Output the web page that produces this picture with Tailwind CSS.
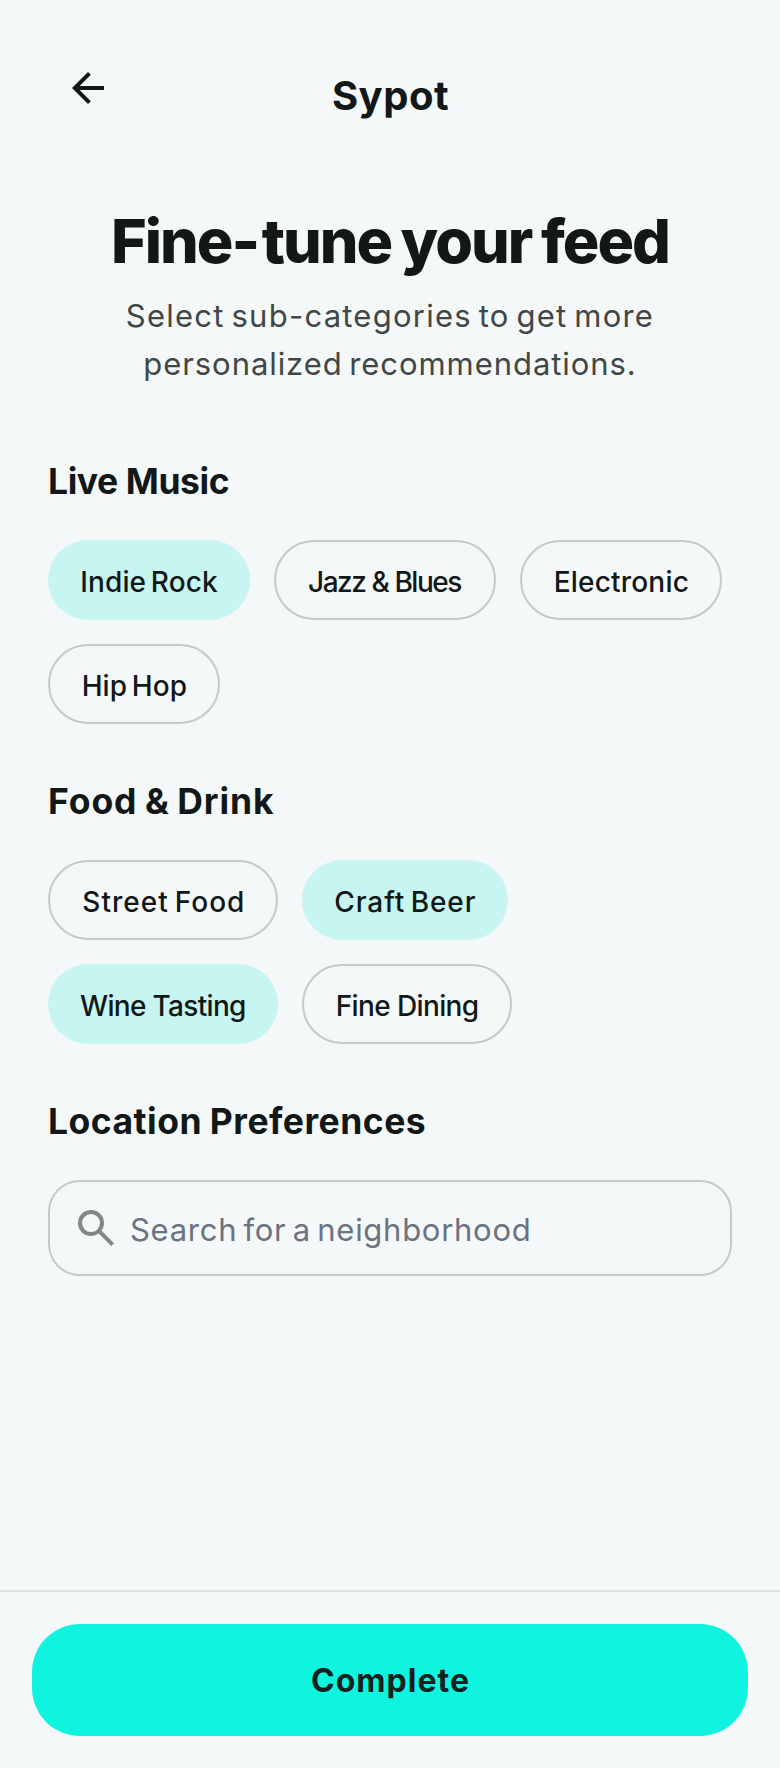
<!DOCTYPE html>
<html lang="en">
<head>
<meta charset="utf-8">
<title>Sypot</title>
<script src="https://cdn.jsdelivr.net/npm/@tailwindcss/browser@4"></script>
</head>
<body class="bg-[#f5f8f8] font-['Inter',sans-serif] text-[#111817]">
<div class="flex h-[1768px] w-[780px] flex-col overflow-hidden">
  <header class="flex h-[200px] shrink-0 items-start justify-between px-16 pt-16">
    <button class="size-12" aria-label="Back">
      <svg class="size-12" viewBox="0 -960 960 960" fill="currentColor"><path d="m313-440 224 224-57 56-320-320 320-320 57 56-224 224h487v80H313Z"/></svg>
    </button>
    <div class="pt-[7px] pl-px text-[40px] leading-[50px] font-bold tracking-[0.5px]">Sypot</div>
    <div class="size-12"></div>
  </header>

  <main class="flex grow flex-col px-12">
    <h1 class="text-center text-[61px] leading-[83px] font-extrabold tracking-[-2px] whitespace-nowrap [word-spacing:-0.03em]">Fine<span class="tracking-[1.5px]">-</span>tune your feed</h1>
    <p class="mt-[9px] text-center text-[31px] leading-12 tracking-[1.24px] text-[#414746] [word-spacing:-0.1em]">Select sub-categories to get more<br><span class="tracking-[0.94px]">personalized recommendations.</span></p>

    <section class="mt-[69px]">
      <h2 class="text-[35.5px] leading-[50px] font-bold tracking-[-0.43px]">Live Music</h2>
      <div class="mt-[33px] flex flex-wrap gap-6 text-[28px] leading-[80px] font-medium whitespace-nowrap">
        <div class="h-20 w-[202px] rounded-full border-2 border-transparent bg-[#c7f5f1] pl-[30.3px] tracking-[0.1px] [word-spacing:-0.1em]">Indie Rock</div>
        <div class="h-20 w-[222px] rounded-full border-2 border-[#c5c9ca] pl-[32px] tracking-[-1.45px]">Jazz &amp; Blues</div>
        <div class="h-20 w-[202px] rounded-full border-2 border-[#c5c9ca] pl-[31.7px] tracking-[0.2px]">Electronic</div>
        <div class="h-20 w-[172px] rounded-full border-2 border-[#c5c9ca] pl-[31.7px] tracking-[0.05px] [word-spacing:-0.1em]">Hip Hop</div>
      </div>
    </section>

    <section class="mt-[53px]">
      <h2 class="text-[35.5px] leading-[50px] font-bold tracking-[0.92px] [word-spacing:-0.05em]">Food &amp; Drink</h2>
      <div class="mt-[33px] grid grid-cols-[230px_auto] justify-start gap-6 text-[28px] leading-[80px] font-medium whitespace-nowrap">
        <div class="h-20 w-[230px] rounded-full border-2 border-[#c5c9ca] pl-[32.3px] tracking-[1.05px] [word-spacing:-0.1em]">Street Food</div>
        <div class="h-20 w-[206px] rounded-full border-2 border-transparent bg-[#c7f5f1] pl-[30.3px] tracking-[0.91px] [word-spacing:-0.1em]">Craft Beer</div>
        <div class="h-20 w-[230px] rounded-full border-2 border-transparent bg-[#c7f5f1] pl-[30px] tracking-[-0.68px]">Wine Tasting</div>
        <div class="h-20 w-[210px] rounded-full border-2 border-[#c5c9ca] pl-[31.7px] tracking-[-0.62px]">Fine Dining</div>
      </div>
    </section>

    <section class="mt-[53px]">
      <h2 class="text-[35.5px] leading-[50px] font-bold tracking-[0.48px] [word-spacing:-0.03em]">Location Preferences</h2>
      <div class="mt-[33px] flex h-24 items-center rounded-[32px] border-2 border-[#c5c9ca] pl-[22px]">
        <svg class="size-12 shrink-0 text-[#838887]" viewBox="0 -960 960 960" fill="currentColor"><path d="M784-120 532-372q-30 24-69 38t-83 14q-109 0-184.5-75.5T120-580q0-109 75.5-184.5T380-840q109 0 184.5 75.5T640-580q0 44-14 83t-38 69l252 252-56 56ZM380-400q75 0 127.5-52.5T560-580q0-75-52.5-127.5T380-760q-75 0-127.5 52.5T200-580q0 75 52.5 127.5T380-400Z"/></svg>
        <span class="pt-1 pl-[10px] text-[31px] leading-12 tracking-[0.72px] whitespace-nowrap text-[#6b7280] [word-spacing:-0.1em]">Search for a neighborhood</span>
      </div>
    </section>
  </main>

  <footer class="h-[178px] shrink-0 border-t-2 border-[#dce1e1] px-8 pt-8">
    <button class="h-28 w-full rounded-[48px] bg-[#0ef4df] pt-px pl-px text-[32px] leading-[112px] font-bold tracking-[1px] text-[#10211f]">Complete</button>
  </footer>
</div>
</body>
</html>
